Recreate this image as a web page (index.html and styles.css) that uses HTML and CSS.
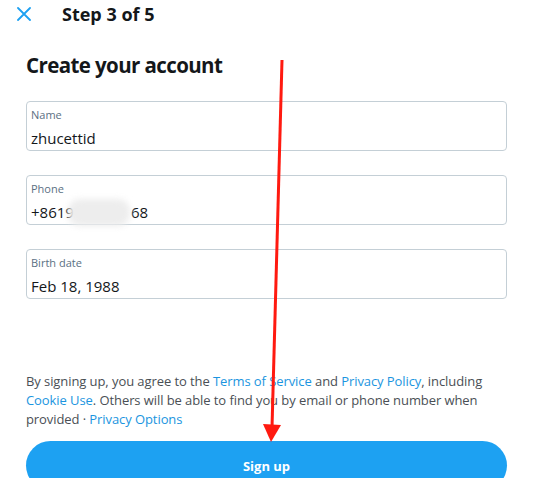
FILE: index.html
```html
<!DOCTYPE html>
<html lang="en">
<head>
<meta charset="utf-8">
<title>Create your account</title>
<link rel="stylesheet" href="styles.css">
</head>
<body>
<div class="page">
  <header class="topbar">
    <svg class="close" width="14" height="14" viewBox="0 0 14 14" aria-hidden="true">
      <path d="M1 1 L13 13 M13 1 L1 13" stroke="#1da1f2" stroke-width="1.8" stroke-linecap="round" fill="none"/>
    </svg>
    <div class="step">Step 3 of 5</div>
  </header>
  <main class="content">
    <h1 class="title">Create your account</h1>
    <div class="fields">
      <div class="field">
        <div class="label">Name</div>
        <div class="value">zhucettid</div>
      </div>
      <div class="field">
        <div class="label">Phone</div>
        <div class="value phone">+8619<span class="gap"></span>68<span class="smudge"></span></div>
      </div>
      <div class="field">
        <div class="label">Birth date</div>
        <div class="value">Feb 18, 1988</div>
      </div>
    </div>
    <p class="terms">By signing up, you agree to the <a href="#">Terms of Service</a> and <a href="#">Privacy Policy</a>, including <a href="#">Cookie Use</a>. Others will be able to find you by email or phone number when provided · <a href="#">Privacy Options</a></p>
    <button class="signup">Sign up</button>
  </main>
  <svg class="arrow" width="533" height="478" viewBox="0 0 533 478" aria-hidden="true">
    <line x1="282" y1="60" x2="272" y2="428" stroke="#ff1a10" stroke-width="3"/>
    <polygon points="263,424 281,425 271,442" fill="#ff1a10"/>
  </svg>
</div>
</body>
</html>
```
FILE: styles.css
```css
* { box-sizing: border-box; }
html, body { margin: 0; padding: 0; background: #fff; }
body {
  font-family: "Open Sans", "Noto Sans", sans-serif;
  color: #14171a;
  width: 533px;
  height: 478px;
  overflow: hidden;
}
.page { position: relative; width: 533px; height: 478px; }
.topbar {
  display: flex;
  align-items: center;
  height: 27px;
  padding-left: 17px;
  gap: 31px;
}
.close { display: block; }
.step {
  font-weight: 700;
  font-size: 18px;
  letter-spacing: 0;
  color: #14171a;
}
.content { padding: 0 26px; }
.title {
  margin: 23px 0 0;
  font-size: 20.5px;
  font-weight: 700;
  line-height: 30px;
  letter-spacing: -0.6px;
}
.fields {
  margin-top: 21px;
  display: flex;
  flex-direction: column;
  gap: 24px;
}
.field {
  height: 50px;
  border: 1px solid #c4cfd6;
  border-radius: 4px;
  padding: 5px 0 0 4px;
}
.label {
  font-size: 11px;
  line-height: 15px;
  color: #5b7083;
}
.value {
  margin-top: 6px;
  font-size: 15px;
  line-height: 20px;
  color: #14171a;
}
.phone { position: relative; }
.gap { display: inline-block; width: 57px; }
.smudge {
  position: absolute;
  left: 37px;
  top: -3px;
  width: 62px;
  height: 27px;
  background: #ededed;
  border-radius: 12px;
  filter: blur(3px);
}
.terms {
  margin: 73px 0 0;
  font-size: 13px;
  line-height: 19px;
  letter-spacing: -0.08px;
  color: #4a4f55;
}
.terms a { color: #1b95e0; text-decoration: none; }
.signup {
  display: block;
  margin-top: 12px;
  width: 100%;
  height: 49px;
  border: none;
  border-radius: 25px;
  background: #1da1f2;
  color: #fff;
  font-family: "Open Sans", "Noto Sans", sans-serif;
  font-weight: 700;
  font-size: 13px;
  padding: 0;
}
.arrow { position: absolute; left: 0; top: 0; pointer-events: none; }
```
